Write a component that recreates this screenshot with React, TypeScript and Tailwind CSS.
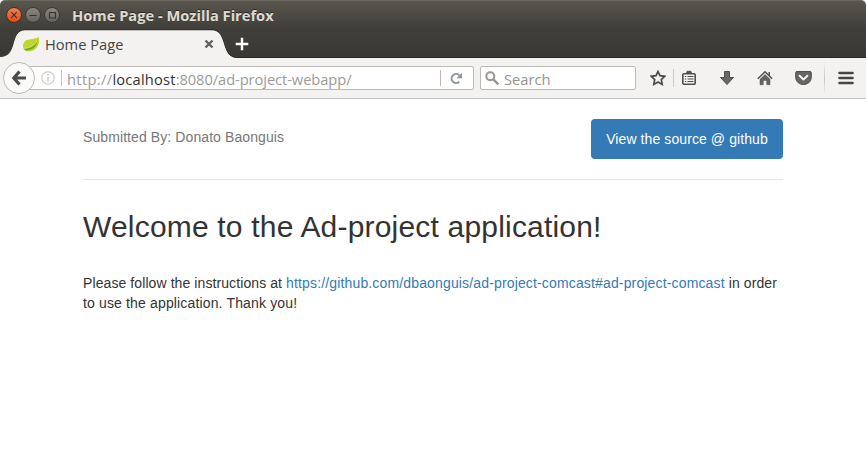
import type { ReactNode } from 'react';

const WindowButton = ({ close, children }: { close?: boolean; children: ReactNode }) => (
  <span
    className={
      close
        ? 'flex size-[16px] items-center justify-center rounded-full border border-[#46301f] bg-linear-to-b from-[#f4804f] to-[#dd4b1d]'
        : 'flex size-[16px] items-center justify-center rounded-full border border-[#3a3935] bg-linear-to-b from-[#8a8880] to-[#66645d]'
    }
  >
    <svg width="14" height="14" viewBox="0 0 14 14" fill="none" stroke="#35322c" strokeWidth="1.1" className="shrink-0">
      {children}
    </svg>
  </span>
);

const TitleBar = () => (
  <header className="flex h-[28px] items-center rounded-t-[5px] border-t border-[#6a675e] bg-linear-to-b from-[#59564d] to-[#403f3a] pt-[1px] pl-[6px]">
    <div className="flex gap-[3px]">
      <WindowButton close><path d="M4.2 4.2l5.6 5.6m0-5.6L4.2 9.8" /></WindowButton>
      <WindowButton><path d="M3.5 7.5h7" /></WindowButton>
      <WindowButton><path d="M4.5 4.5h6v5.5h-6z" /></WindowButton>
    </div>
    <h1 className="ml-[12px] whitespace-nowrap text-[14.67px] leading-[20px] font-bold text-[#dfdbd2] [text-shadow:0_-1px_0_#2a2926]">
      Home Page - Mozilla Firefox
    </h1>
  </header>
);

const TabStrip = () => (
  <div className="flex h-[30px] bg-linear-to-b from-[#403f3a] to-[#393834]">
    <div className="relative h-[30px] w-[232px] shrink-0">
      <svg className="absolute top-0 left-0" width="866" height="30" viewBox="0 0 866 30">
        <path d="M0 29.5H3C18 29.5 9 2 25 2H212C228 2 220 29.5 237 29.5H866" fill="#f3f2f0" stroke="#272622" />
        <path d="M0 30V29C19 29 9 2.5 25 2.5H212C228 2.5 220 30 237 30Z" fill="#f3f2f0" />
      </svg>
      <div className="relative flex h-full items-center pt-[1px] pl-[22px]">
        <svg width="18" height="18" viewBox="0 0 18 18">
          <path d="M16.5 1.5C14 4.5 10 3.5 5 5C1 7 0 11 2 14.5C4 17 9 16.5 12 15C17 12 18 6 16.5 1.5Z" fill="#bfd62b" />
          <path d="M2 13.5C7 14 13 11 15.5 6C15 12 9 16 3.5 15.5Z" fill="#71a834" />
          <path d="M2 13.3C8 13 12 10 15 6" fill="none" stroke="#e8ef79" strokeWidth=".6" />
        </svg>
        <span className="ml-[5px] w-[159px] text-[14.67px] leading-[20px] text-[#454543]">Home Page</span>
        <svg width="10" height="10" viewBox="0 0 10 10" fill="none" stroke="#62615e" strokeWidth="2.4">
          <path d="M1.5 1.5l7 7m0-7l-7 7" />
        </svg>
      </div>
    </div>
    <svg className="relative mt-[8px] ml-[2px]" width="16" height="16" viewBox="0 0 16 16" fill="none" stroke="#fff" strokeWidth="2.4">
      <path d="M8 1.7v12.6M1.7 8h12.6" />
    </svg>
  </div>
);

const AddressBar = () => (
  <div className="flex shrink-0 items-center">
    <div className="relative z-10 flex size-[32px] items-center justify-center rounded-full border border-[#bdbab6] bg-[#fafaf9]">
      <svg width="16" height="16" viewBox="0 0 16 16" fill="none" stroke="#4b4b4b" strokeWidth="3.2">
        <path d="M8.5 1.5L2.8 8l5.7 6.5M3 8h12" />
      </svg>
    </div>
    <div className="-ml-[6px] flex h-[24px] w-[445px] items-center rounded-r-[2px] border border-[#bdbab6] bg-white pl-[11px]">
      <svg width="14" height="14" viewBox="0 0 14 14" fill="none" stroke="#c8c8c8">
        <circle cx="7" cy="7" r="6.3" strokeWidth="1.1" />
        <path d="M7 6v4.5M7 3v1.6" strokeWidth="1.5" />
      </svg>
      <span className="ml-[6px] h-[16px] w-px bg-[#c6c4c1]" />
      <span className="ml-[5px] w-[373px] pt-[2px] whitespace-nowrap text-[14.67px] leading-[20px] text-[#9b9b99]">
        <span className="tracking-[0.35px]">http://</span>
        <span className="tracking-[0.2px] text-[#33322f]">localhost</span>
        <span className="tracking-[-0.06px]">:8080/ad-project-webapp/</span>
      </span>
      <span className="h-[16px] w-px bg-[#bbb9b6]" />
      <svg className="ml-[9px]" width="13" height="13" viewBox="0 0 13 13">
        <path d="M9.3 9.7A4.5 4.5 0 1 1 9.2 3.2" fill="none" stroke="#8996a0" strokeWidth="2" />
        <path d="M12 .8V6.3H6.5Z" fill="#8996a0" />
      </svg>
    </div>
  </div>
);

const SearchBox = () => (
  <div className="ml-[6px] flex h-[24px] w-[156px] shrink-0 items-center rounded-[2px] border border-[#bdbab6] bg-white pl-[4px]">
    <svg width="15" height="15" viewBox="0 0 15 15" fill="none" stroke="#969696">
      <circle cx="5.3" cy="5.3" r="4" strokeWidth="2" />
      <path d="M8.3 8.3l5 5" strokeWidth="2.5" />
    </svg>
    <span className="ml-[4px] pt-[2px] text-[14.67px] leading-[20px] text-[#92928f]">Search</span>
  </div>
);

const ToolbarIcons = () => (
  <div className="flex h-full items-center">
    <svg className="ml-[14px]" width="16" height="16" viewBox="0 0 16 16">
      <path d="M8 1.5l2 4.2 4.8.6-3.5 3.2.9 4.9L8 12l-4.2 2.4.9-4.9L1.2 6.3 6 5.7z" fill="none" stroke="#4a4a4a" strokeWidth="1.7" />
    </svg>
    <span className="ml-[7px] h-[18px] w-px bg-[#cecdca]" />
    <svg className="ml-[7px]" width="16" height="16" viewBox="0 0 16 16" fill="none" stroke="#505050">
      <rect x="1.8" y="3.8" width="12.4" height="10.4" rx="1" strokeWidth="1.6" />
      <path d="M4.5 3.5L6 2.5V1.3h4v1.2l1.5 1" fill="#505050" />
      <path d="M3.8 6.5h1.4M3.8 9h1.4M3.8 11.5h1.4M6.5 6.5h6M6.5 9h6M6.5 11.5h6" strokeWidth="1.1" />
    </svg>
    <svg className="ml-[22px]" width="16" height="16" viewBox="0 0 16 16">
      <path d="M5.5 1.5h5v6h4L8 14.5 1.5 7.5h4Z" fill="#686868" stroke="#4c4c4c" strokeLinejoin="round" />
    </svg>
    <svg className="ml-[22px]" width="16" height="16" viewBox="0 0 16 16">
      <path d="M.8 8.8L8 1.8l7.2 7" fill="none" stroke="#505050" strokeWidth="1.5" />
      <path d="M3 9.3l5-4.8 5 4.8v5.4H9.7v-4.2H6.3v4.2H3z" fill="#636363" stroke="#505050" strokeWidth=".5" />
      <path d="M11.5 2H13v4l-1.5-1.5z" fill="#505050" />
    </svg>
    <svg className="ml-[22px]" width="17" height="16" viewBox="0 0 17 16">
      <path d="M2 1.5h13q1.3 0 1.3 1.3V7C16.3 17 .7 17 .7 7V2.8Q.7 1.5 2 1.5Z" fill="#656565" stroke="#505050" />
      <path d="M4.6 5.8l3.9 3.7 3.9-3.7" fill="none" stroke="#f5f5f5" strokeWidth="2" strokeLinecap="round" strokeLinejoin="round" />
    </svg>
    <span className="ml-[12px] h-[34px] w-px bg-linear-to-b from-[#f3f2f0] via-[#c7c6c3] to-[#f3f2f0]" />
    <svg className="ml-[13px]" width="16" height="14" viewBox="0 0 16 14" stroke="#464646" strokeWidth="2.6" strokeLinecap="round">
      <path d="M1.5 2h13M1.5 7h13M1.5 12h13" />
    </svg>
  </div>
);

export default function App() {
  return (
    <div className="h-[454px] w-[866px] overflow-hidden bg-white">
      <div className="[font-family:'Open_Sans','Noto_Sans',sans-serif]">
        <TitleBar />
        <TabStrip />
        <nav className="relative flex h-[41px] items-center border-b border-[#c4c2be] bg-[#f3f2f0] pl-[3px]">
          <AddressBar />
          <SearchBox />
          <ToolbarIcons />
        </nav>
      </div>
      <main className="mx-[83px] text-[14px] leading-[20px] tracking-[0.09px] text-[#333] [font-family:'Liberation_Sans',Arial,sans-serif]">
        <div className="flex h-[81px] items-start justify-between border-b border-[#e5e5e5] pt-[20px]">
          <h3 className="mt-[8px] text-[#777]">Submitted By: Donato Baonguis</h3>
          <a className="flex h-[40px] w-[192px] items-center justify-center rounded-[4px] bg-[#337ab7] text-white">
            View the source @ github
          </a>
        </div>
        <h2 className="mt-[30px] text-[30px] leading-[33px] tracking-[0.19px]">Welcome to the Ad-project application!</h2>
        <div className="mt-[30px]">
          <div className="flex whitespace-pre">
            <span>Please follow the instructions at </span>
            <a className="tracking-[0.15px] text-[#337ab7]">https://github.com/dbaonguis/ad-project-comcast#ad-project-comcast</a>
            <span> in order</span>
          </div>
          <div className="tracking-[0.15px]">to use the application. Thank you!</div>
        </div>
      </main>
    </div>
  );
}
